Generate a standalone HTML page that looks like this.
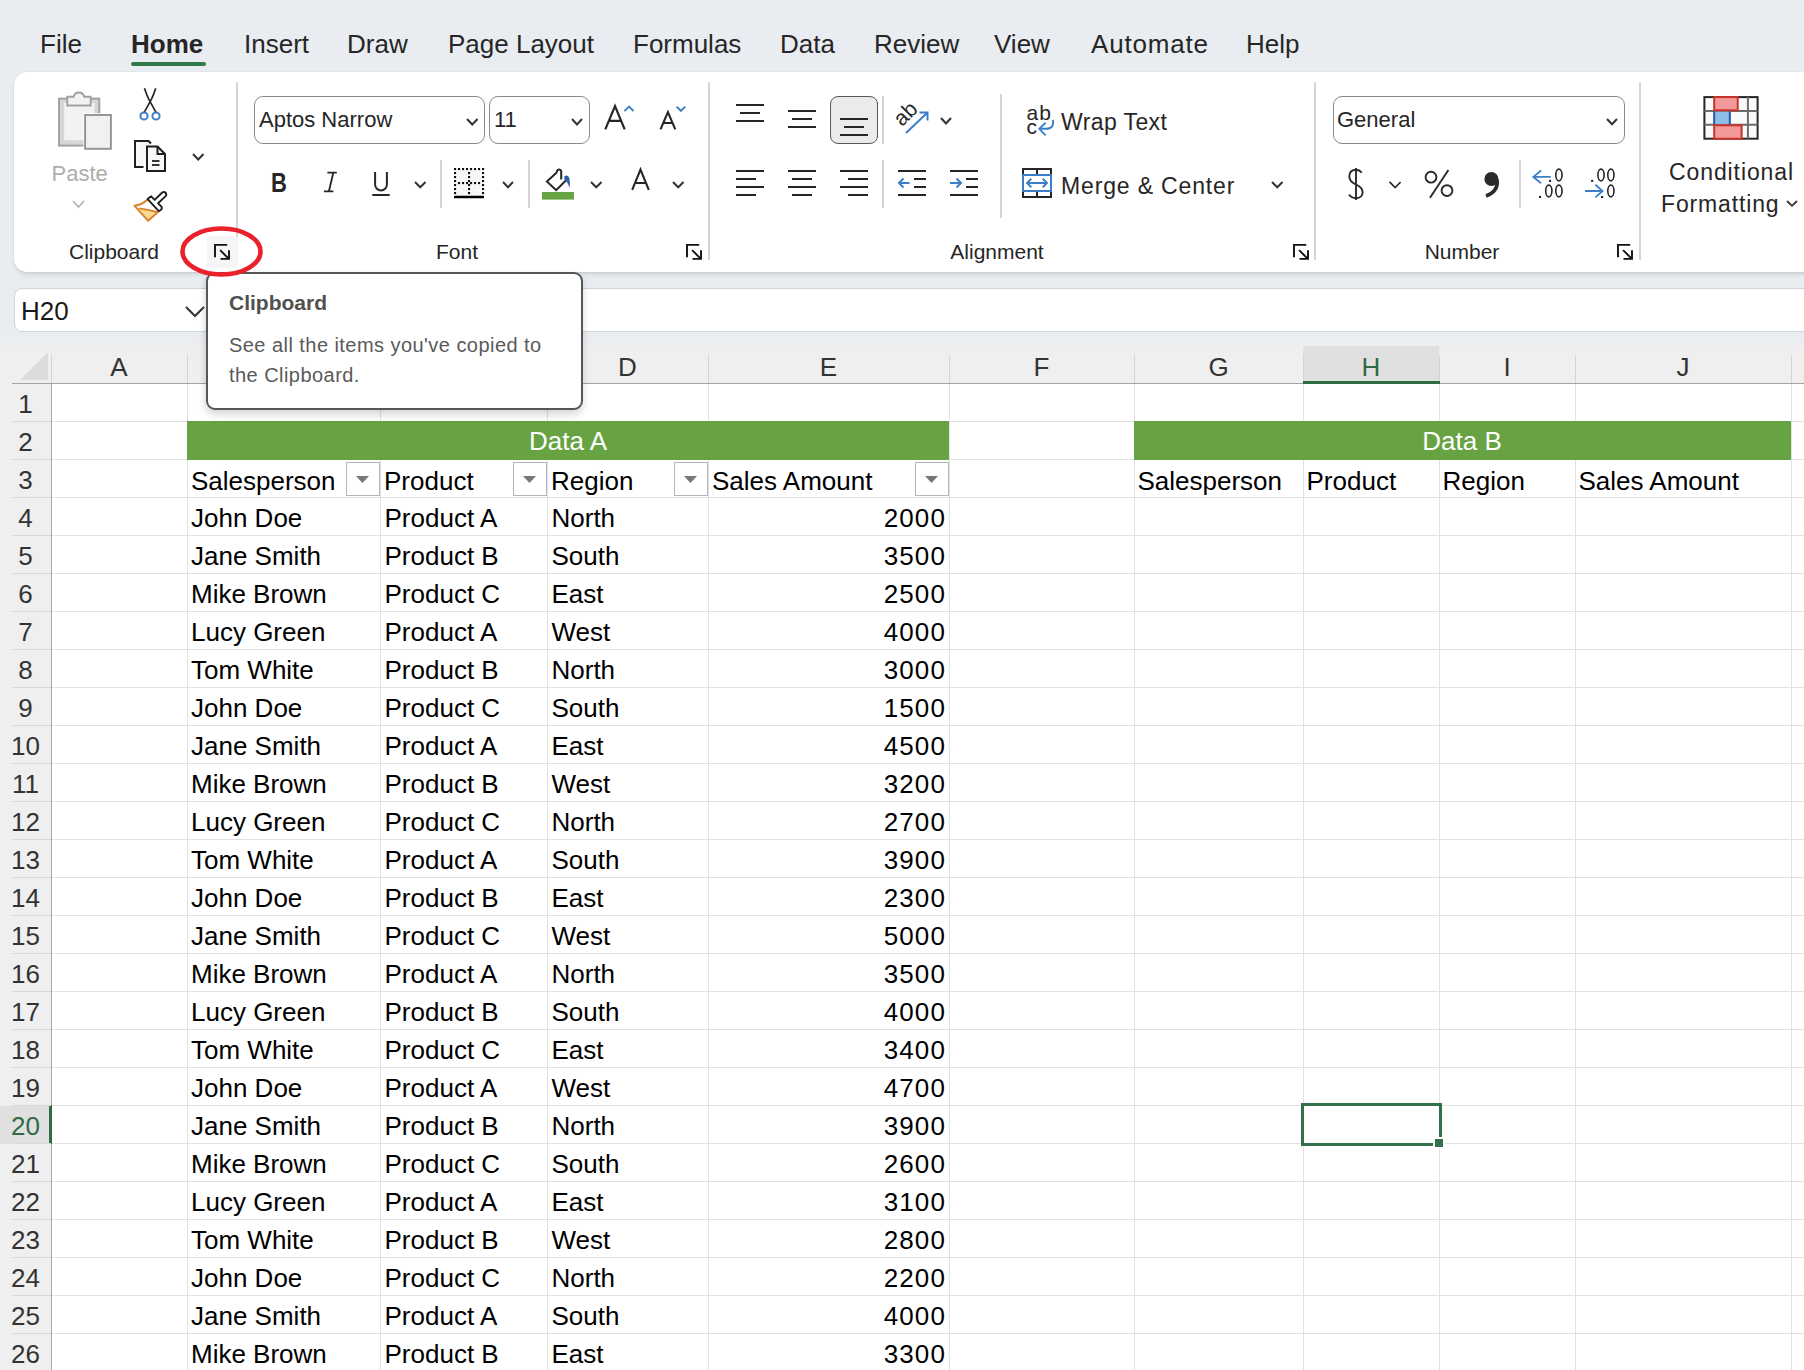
<!DOCTYPE html>
<html><head><meta charset="utf-8"><title>Excel</title>
<style>
html,body{margin:0;padding:0;}
body{width:1804px;height:1370px;overflow:hidden;position:relative;background:#e9ecf0;font-family:"Liberation Sans", sans-serif;}
.t{position:absolute;white-space:pre;font-family:"Liberation Sans", sans-serif;}
.r{position:absolute;box-sizing:border-box;}
</style></head><body>
<div class="t" style="left:40.0px;top:31.0px;font-size:26px;line-height:26px;color:#262626;font-weight:400;">File</div><div class="t" style="left:131.0px;top:31.0px;font-size:26px;line-height:26px;color:#262626;font-weight:700;">Home</div><div class="t" style="left:244.0px;top:31.0px;font-size:26px;line-height:26px;color:#262626;font-weight:400;">Insert</div><div class="t" style="left:347.0px;top:31.0px;font-size:26px;line-height:26px;color:#262626;font-weight:400;">Draw</div><div class="t" style="left:448.0px;top:31.0px;font-size:26px;line-height:26px;color:#262626;font-weight:400;">Page Layout</div><div class="t" style="left:633.0px;top:31.0px;font-size:26px;line-height:26px;color:#262626;font-weight:400;">Formulas</div><div class="t" style="left:780.0px;top:31.0px;font-size:26px;line-height:26px;color:#262626;font-weight:400;">Data</div><div class="t" style="left:874.0px;top:31.0px;font-size:26px;line-height:26px;color:#262626;font-weight:400;">Review</div><div class="t" style="left:994.0px;top:31.0px;font-size:26px;line-height:26px;color:#262626;font-weight:400;">View</div><div class="t" style="left:1091.0px;top:31.0px;font-size:26px;line-height:26px;color:#262626;font-weight:400;letter-spacing:0.8px;">Automate</div><div class="t" style="left:1246.0px;top:31.0px;font-size:26px;line-height:26px;color:#262626;font-weight:400;">Help</div><div class="r" style="left:131px;top:62px;width:75px;height:4px;background:#2f7a48;border-radius:2px;"></div><div class="r" style="left:14px;top:72px;width:1830px;height:200px;background:#fff;border-radius:13px;box-shadow:0 3px 5px -1px rgba(0,0,0,0.13),0 0 1.5px rgba(0,0,0,0.12);"></div><div class="r" style="left:236px;top:82px;width:2px;height:178px;background:#d6d6d6;"></div><div class="r" style="left:708px;top:82px;width:2px;height:178px;background:#d6d6d6;"></div><div class="r" style="left:1314px;top:82px;width:2px;height:178px;background:#d6d6d6;"></div><div class="r" style="left:1639px;top:82px;width:2px;height:178px;background:#d6d6d6;"></div><div class="r" style="left:440px;top:160px;width:2px;height:48px;background:#d6d6d6;"></div><div class="r" style="left:528px;top:160px;width:2px;height:48px;background:#d6d6d6;"></div><div class="r" style="left:882px;top:96px;width:2px;height:48px;background:#d6d6d6;"></div><div class="r" style="left:882px;top:160px;width:2px;height:48px;background:#d6d6d6;"></div><div class="r" style="left:1519px;top:160px;width:2px;height:48px;background:#d6d6d6;"></div><svg class="r" style="left:52px;top:86px;" width="64" height="68" viewBox="0 0 64 68">
<rect x="7" y="12.6" width="40.3" height="47" fill="#d6d6d6" stroke="#a0a0a0" stroke-width="1.9"/>
<rect x="12.2" y="17" width="30.2" height="37.3" fill="#f2f2f2"/>
<path d="M15.3 19.5 V10.8 H21.6 A5.4 5.4 0 0 1 32.2 10.8 H38.7 V19.5 Z" fill="#f2f2f2" stroke="#a0a0a0" stroke-width="1.9"/>
<rect x="31.5" y="27.2" width="29.2" height="37.4" fill="#fff"/>
<rect x="33.1" y="29" width="25.8" height="33.8" fill="#f1f1f1" stroke="#939393" stroke-width="1.9"/>
</svg><div class="t" style="left:51.5px;top:163.4px;font-size:22px;line-height:22px;color:#adadad;font-weight:400;">Paste</div><svg class="r" style="left:71px;top:199px;" width="15" height="10" viewBox="0 0 15 10"><path d="M2 2 L7.5 8 L13 2" fill="none" stroke="#b0b0b0" stroke-width="1.6" stroke-linejoin="miter"/></svg><svg class="r" style="left:136px;top:84px;" width="28" height="40" viewBox="0 0 28 40">
<path d="M8.5 4.3 Q11.5 13.5 14.1 17.6 L20 28.4 M19.7 4.3 Q16.7 13.5 14.1 17.6 L8.2 28.4" fill="none" stroke="#262626" stroke-width="1.7"/>
<circle cx="8" cy="32" r="3.6" fill="#fff" stroke="#3c7fc6" stroke-width="2"/>
<circle cx="20" cy="32" r="3.6" fill="#fff" stroke="#3c7fc6" stroke-width="2"/>
</svg><svg class="r" style="left:130px;top:136px;" width="40" height="40" viewBox="0 0 40 40">
<path d="M13.5 31 H5 V5 H18.5 L21 7.5" fill="#f7f7f7" stroke="#1f1f1f" stroke-width="2"/>
<path d="M17 35 V10.5 H27.5 L35 18 V35 Z" fill="#f7f7f7" stroke="#1f1f1f" stroke-width="2"/>
<path d="M27.5 10.5 V18 H35" fill="none" stroke="#1f1f1f" stroke-width="2"/>
<path d="M22 25 H29.5 M22 29 H29.5" stroke="#333" stroke-width="1.8"/>
</svg><svg class="r" style="left:191px;top:152px;" width="14.5" height="9.5" viewBox="0 0 14.5 9.5"><path d="M2 2 L7.25 7.5 L12.5 2" fill="none" stroke="#333" stroke-width="2" stroke-linejoin="miter"/></svg><svg class="r" style="left:132px;top:188px;" width="38" height="38" viewBox="0 0 38 38">
<path d="M6.6 20.4 Q16 21.5 25.5 24.2 L16.2 32.6 Z" fill="#fbd98e"/>
<path d="M15.8 11.3 Q10 17 2.6 17.8 L16.2 32.8 L26.2 23.8" fill="none" stroke="#d9822b" stroke-width="1.9" stroke-linejoin="round"/>
<path d="M6.6 20.4 Q16 21.5 25.5 24.2" fill="none" stroke="#d9822b" stroke-width="1.9"/>
<path d="M15.6 11.1 L19.1 8.3 L22.7 11.9 L30.2 4.5 Q32.2 3.3 33.8 5 Q35 6.8 33.4 8.4 L26.1 15.3 L29.4 18.6 Q30.6 20.5 28.8 22 L26.8 23.2 Z" fill="#fff" stroke="#1f1f1f" stroke-width="1.9" stroke-linejoin="round"/>
</svg><div class="t" style="left:69.0px;top:241.2px;font-size:21px;line-height:21px;color:#262626;font-weight:400;">Clipboard</div><div class="r" style="left:207px;top:236px;width:31px;height:32px;background:#f5f5f5;border-radius:3px;"></div><svg class="r" style="left:213px;top:243px;" width="18" height="18" viewBox="0 0 18 18"><path d="M2 14.2 V1.9 H14.2" fill="none" stroke="#111" stroke-width="1.9"/><path d="M7.1 7.1 L15.3 15.3 M7.5 15.9 H16 V7.3" fill="none" stroke="#111" stroke-width="1.9"/></svg><div class="r" style="left:254px;top:96px;width:231px;height:48px;border:1.5px solid #8a8a8a;border-radius:9px;background:#fff;"></div><div class="t" style="left:259.0px;top:109.4px;font-size:22px;line-height:22px;color:#262626;font-weight:400;">Aptos Narrow</div><svg class="r" style="left:464.5px;top:116.5px;" width="14.5" height="9.5" viewBox="0 0 14.5 9.5"><path d="M2 2 L7.25 7.5 L12.5 2" fill="none" stroke="#333" stroke-width="2" stroke-linejoin="miter"/></svg><div class="r" style="left:489px;top:96px;width:101px;height:48px;border:1.5px solid #8a8a8a;border-radius:9px;background:#fff;"></div><div class="t" style="left:494.0px;top:109.4px;font-size:22px;line-height:22px;color:#262626;font-weight:400;">11</div><svg class="r" style="left:570px;top:116.5px;" width="14" height="9.5" viewBox="0 0 14 9.5"><path d="M2 2 L7.0 7.5 L12 2" fill="none" stroke="#333" stroke-width="2" stroke-linejoin="miter"/></svg><svg class="r" style="left:595px;top:95px;" width="100" height="45" viewBox="0 0 100 45">
<path d="M10.3 34.4 L20 11.2 L29.7 34.4 M13.6 25.8 H26.4" fill="none" stroke="#262626" stroke-width="2.2" stroke-linejoin="miter"/>
<path d="M29.4 16.1 L34.1 11.6 L38.6 16.1" fill="none" stroke="#3c7fc6" stroke-width="2"/>
<path d="M65.5 34.4 L72.9 17.2 L80.3 34.4 M68.3 28 H77.5" fill="none" stroke="#262626" stroke-width="2.1" stroke-linejoin="miter"/>
<path d="M81.6 11.6 L85.9 15.8 L90.3 11.6" fill="none" stroke="#3c7fc6" stroke-width="2"/>
</svg><div class="t" style="left:271.0px;top:168.7px;font-size:27.5px;line-height:27.5px;color:#262626;font-weight:700;transform:scaleX(0.8);transform-origin:0 0;">B</div><svg class="r" style="left:318px;top:168px;" width="24" height="28" viewBox="0 0 24 28"><path d="M9.4 4.6 H18.8 M5.9 23.4 H15.4 M15.3 4.6 L10.9 23.4" fill="none" stroke="#262626" stroke-width="1.9"/></svg><svg class="r" style="left:369px;top:168px;" width="24" height="30" viewBox="0 0 24 30"><path d="M6.1 4 V16.5 A5.9 5.9 0 0 0 17.9 16.5 V4" fill="none" stroke="#262626" stroke-width="2"/><path d="M3.3 27 H20.7" stroke="#262626" stroke-width="2"/></svg><svg class="r" style="left:413px;top:180px;" width="14.5" height="9.3" viewBox="0 0 14.5 9.3"><path d="M2 2 L7.25 7.3 L12.5 2" fill="none" stroke="#333" stroke-width="2" stroke-linejoin="miter"/></svg><svg class="r" style="left:448px;top:162px;" width="44" height="42" viewBox="0 0 44 42"><rect x="7" y="7" width="28" height="28" fill="#f7f7f7"/><g fill="#111"><rect x="6.00" y="6.00" width="2.1" height="2.1"/><rect x="10.00" y="6.00" width="2.1" height="2.1"/><rect x="14.00" y="6.00" width="2.1" height="2.1"/><rect x="18.00" y="6.00" width="2.1" height="2.1"/><rect x="22.00" y="6.00" width="2.1" height="2.1"/><rect x="26.00" y="6.00" width="2.1" height="2.1"/><rect x="30.00" y="6.00" width="2.1" height="2.1"/><rect x="34.00" y="6.00" width="2.1" height="2.1"/><rect x="6.00" y="10.00" width="2.1" height="2.1"/><rect x="34.00" y="10.00" width="2.1" height="2.1"/><rect x="6.00" y="14.00" width="2.1" height="2.1"/><rect x="34.00" y="14.00" width="2.1" height="2.1"/><rect x="6.00" y="18.00" width="2.1" height="2.1"/><rect x="34.00" y="18.00" width="2.1" height="2.1"/><rect x="6.00" y="22.00" width="2.1" height="2.1"/><rect x="34.00" y="22.00" width="2.1" height="2.1"/><rect x="6.00" y="26.00" width="2.1" height="2.1"/><rect x="34.00" y="26.00" width="2.1" height="2.1"/><rect x="6.00" y="30.00" width="2.1" height="2.1"/><rect x="34.00" y="30.00" width="2.1" height="2.1"/><rect x="20.00" y="10.00" width="2.1" height="2.1"/><rect x="20.00" y="14.00" width="2.1" height="2.1"/><rect x="20.00" y="18.00" width="2.1" height="2.1"/><rect x="20.00" y="22.00" width="2.1" height="2.1"/><rect x="20.00" y="26.00" width="2.1" height="2.1"/><rect x="20.00" y="30.00" width="2.1" height="2.1"/><rect x="10.00" y="20.00" width="2.1" height="2.1"/><rect x="14.00" y="20.00" width="2.1" height="2.1"/><rect x="18.00" y="20.00" width="2.1" height="2.1"/><rect x="22.00" y="20.00" width="2.1" height="2.1"/><rect x="26.00" y="20.00" width="2.1" height="2.1"/><rect x="30.00" y="20.00" width="2.1" height="2.1"/></g><rect x="6" y="33.8" width="30" height="2.5" rx="0.6" fill="#000"/></svg><svg class="r" style="left:501px;top:180px;" width="14" height="9.3" viewBox="0 0 14 9.3"><path d="M2 2 L7.0 7.3 L12 2" fill="none" stroke="#333" stroke-width="2" stroke-linejoin="miter"/></svg><svg class="r" style="left:540px;top:164px;" width="38" height="38" viewBox="0 0 38 38">
<path d="M17 8.3 L6.9 17.5 L16.2 26.2 L26.6 15.8" fill="#fff" stroke="#262626" stroke-width="2" stroke-linejoin="miter"/>
<path d="M17 8.3 V7 A2.2 2.2 0 0 1 21.2 7 V15.5" fill="none" stroke="#262626" stroke-width="2"/>
<path d="M24.2 12.5 Q27 10 29.2 13.5 Q30.5 18 29.4 24.5 Q28.2 18 24.6 16 Z" fill="#2d5fa8"/>
<rect x="2" y="28" width="32" height="7.6" fill="#67a542"/>
</svg><svg class="r" style="left:589px;top:180px;" width="14.5" height="9.3" viewBox="0 0 14.5 9.3"><path d="M2 2 L7.25 7.3 L12.5 2" fill="none" stroke="#333" stroke-width="2" stroke-linejoin="miter"/></svg><svg class="r" style="left:625px;top:160px;" width="30" height="35" viewBox="0 0 30 35"><path d="M7.2 29.8 L15.5 9.6 L23.8 29.8 M9.8 23 H21.2" fill="none" stroke="#262626" stroke-width="2.1"/></svg><svg class="r" style="left:671px;top:180px;" width="14.5" height="9.3" viewBox="0 0 14.5 9.3"><path d="M2 2 L7.25 7.3 L12.5 2" fill="none" stroke="#333" stroke-width="2" stroke-linejoin="miter"/></svg><div class="t" style="left:407.0px;width:100px;text-align:center;top:241.2px;font-size:21px;line-height:21px;color:#262626;font-weight:400;">Font</div><svg class="r" style="left:685px;top:243px;" width="18" height="18" viewBox="0 0 18 18"><path d="M2 14.2 V1.9 H14.2" fill="none" stroke="#111" stroke-width="1.9"/><path d="M7.1 7.1 L15.3 15.3 M7.5 15.9 H16 V7.3" fill="none" stroke="#111" stroke-width="1.9"/></svg><svg class="r" style="left:730px;top:98px;" width="40" height="32" viewBox="0 0 40 32"><path d="M6 7 H34" stroke="#262626" stroke-width="2"/><path d="M10 15 H30" stroke="#262626" stroke-width="2"/><path d="M6 23 H34" stroke="#262626" stroke-width="2"/></svg><svg class="r" style="left:782px;top:104px;" width="40" height="32" viewBox="0 0 40 32"><path d="M6 7 H34" stroke="#262626" stroke-width="2"/><path d="M10 15 H30" stroke="#262626" stroke-width="2"/><path d="M6 23 H34" stroke="#262626" stroke-width="2"/></svg><div class="r" style="left:830px;top:96px;width:48px;height:48px;border:1.5px solid #5a5a5a;border-radius:8px;background:#ebebeb;"></div><svg class="r" style="left:834px;top:112px;" width="40" height="32" viewBox="0 0 40 32"><path d="M6 7 H34" stroke="#262626" stroke-width="2"/><path d="M10 15 H30" stroke="#262626" stroke-width="2"/><path d="M6 23 H34" stroke="#262626" stroke-width="2"/></svg><svg class="r" style="left:890px;top:100px;" width="44" height="40" viewBox="0 0 44 40">
<text x="0" y="0" transform="translate(12 27.3) rotate(-45)" font-family="Liberation Sans" font-size="21.5" fill="#262626">ab</text>
<path d="M16 33 L37 13 M29.5 12.5 H37.5 V20.5" fill="none" stroke="#3c7fc6" stroke-width="2"/>
</svg><svg class="r" style="left:939px;top:115.8px;" width="14" height="9.5" viewBox="0 0 14 9.5"><path d="M2 2 L7.0 7.5 L12 2" fill="none" stroke="#333" stroke-width="2" stroke-linejoin="miter"/></svg><svg class="r" style="left:730px;top:164px;" width="40" height="36" viewBox="0 0 40 36"><path d="M6 7 H34" stroke="#262626" stroke-width="2"/><path d="M6 15 H26" stroke="#262626" stroke-width="2"/><path d="M6 23 H34" stroke="#262626" stroke-width="2"/><path d="M6 31 H26" stroke="#262626" stroke-width="2"/></svg><svg class="r" style="left:782px;top:164px;" width="40" height="36" viewBox="0 0 40 36"><path d="M6 7 H34" stroke="#262626" stroke-width="2"/><path d="M10 15 H30" stroke="#262626" stroke-width="2"/><path d="M6 23 H34" stroke="#262626" stroke-width="2"/><path d="M10 31 H30" stroke="#262626" stroke-width="2"/></svg><svg class="r" style="left:834px;top:164px;" width="40" height="36" viewBox="0 0 40 36"><path d="M6 7 H34" stroke="#262626" stroke-width="2"/><path d="M14 15 H34" stroke="#262626" stroke-width="2"/><path d="M6 23 H34" stroke="#262626" stroke-width="2"/><path d="M14 31 H34" stroke="#262626" stroke-width="2"/></svg><svg class="r" style="left:892px;top:164px;" width="40" height="36" viewBox="0 0 40 36"><path d="M6 7 H34" stroke="#262626" stroke-width="2"/><path d="M22 15 H34" stroke="#262626" stroke-width="2"/><path d="M22 23 H34" stroke="#262626" stroke-width="2"/><path d="M6 31 H34" stroke="#262626" stroke-width="2"/><path d="M7 19 H17.5 M11.5 14.5 L7 19 L11.5 23.5" fill="none" stroke="#3c7fc6" stroke-width="2"/></svg><svg class="r" style="left:944px;top:164px;" width="40" height="36" viewBox="0 0 40 36"><path d="M6 7 H34" stroke="#262626" stroke-width="2"/><path d="M22 15 H34" stroke="#262626" stroke-width="2"/><path d="M22 23 H34" stroke="#262626" stroke-width="2"/><path d="M6 31 H34" stroke="#262626" stroke-width="2"/><path d="M6 19 H17 M12.5 14.5 L17 19 L12.5 23.5" fill="none" stroke="#3c7fc6" stroke-width="2"/></svg><div class="r" style="left:1000px;top:94px;width:2px;height:124px;background:#d6d6d6;"></div><svg class="r" style="left:1024px;top:100px;" width="36" height="40" viewBox="0 0 36 40">
<text x="2.6" y="19.6" font-family="Liberation Sans" font-size="21" fill="#262626">a</text>
<text x="15.2" y="19.6" font-family="Liberation Sans" font-size="21" fill="#262626">b</text>
<text x="2.6" y="33.6" font-family="Liberation Sans" font-size="21" fill="#262626">c</text>
<path d="M28.8 20 Q30.5 28.8 22 28.8 H15.8" fill="none" stroke="#3c7fc6" stroke-width="1.9"/>
<path d="M21.6 22.7 L15.3 28.8 L21.6 35.3" fill="none" stroke="#3c7fc6" stroke-width="1.9"/>
</svg><div class="t" style="left:1061.0px;top:110.5px;font-size:23px;line-height:23px;color:#262626;font-weight:400;letter-spacing:0.4px;">Wrap Text</div><svg class="r" style="left:1020px;top:166px;" width="34" height="34" viewBox="0 0 34 34">
<rect x="3" y="3" width="28" height="28" fill="#fff" stroke="#262626" stroke-width="2"/>
<path d="M17 3 V31" stroke="#262626" stroke-width="2"/>
<rect x="3" y="9" width="28" height="16" fill="#fff" stroke="#3c7fc6" stroke-width="2"/>
<path d="M7.5 17 H26.5 M11.3 12.8 L7 17 L11.3 21.2 M22.7 12.8 L27 17 L22.7 21.2" fill="none" stroke="#3c7fc6" stroke-width="1.9"/>
</svg><div class="t" style="left:1061.0px;top:174.5px;font-size:23px;line-height:23px;color:#262626;font-weight:400;letter-spacing:0.85px;">Merge &amp; Center</div><svg class="r" style="left:1270px;top:180px;" width="14.5" height="9.3" viewBox="0 0 14.5 9.3"><path d="M2 2 L7.25 7.3 L12.5 2" fill="none" stroke="#333" stroke-width="2" stroke-linejoin="miter"/></svg><div class="t" style="left:897.0px;width:200px;text-align:center;top:241.2px;font-size:21px;line-height:21px;color:#262626;font-weight:400;">Alignment</div><svg class="r" style="left:1292px;top:243px;" width="18" height="18" viewBox="0 0 18 18"><path d="M2 14.2 V1.9 H14.2" fill="none" stroke="#111" stroke-width="1.9"/><path d="M7.1 7.1 L15.3 15.3 M7.5 15.9 H16 V7.3" fill="none" stroke="#111" stroke-width="1.9"/></svg><div class="r" style="left:1333px;top:96px;width:292px;height:48px;border:1.5px solid #8a8a8a;border-radius:9px;background:#fff;"></div><div class="t" style="left:1337.0px;top:109.4px;font-size:22px;line-height:22px;color:#262626;font-weight:400;">General</div><svg class="r" style="left:1605px;top:117px;" width="14" height="9.3" viewBox="0 0 14 9.3"><path d="M2 2 L7.0 7.3 L12 2" fill="none" stroke="#333" stroke-width="2" stroke-linejoin="miter"/></svg><svg class="r" style="left:1340px;top:160px;" width="170" height="45" viewBox="0 0 170 45">
<path d="M16 8 V40" stroke="#2a2a2a" stroke-width="1.9"/>
<path d="M21.8 12.6 Q19 9.5 15.5 9.8 Q9.2 10.3 9.3 16.8 Q9.4 21.5 16 24.5 Q22.8 27.5 22.6 32.5 Q22.3 38 16 38.2 Q11.5 38.2 9 34.5" fill="none" stroke="#2a2a2a" stroke-width="1.9"/>
<path d="M49.5 21.8 L55.2 27.6 L60.6 22" fill="none" stroke="#2a2a2a" stroke-width="1.7"/>
<circle cx="91" cy="17.2" r="5.4" fill="none" stroke="#2a2a2a" stroke-width="1.9"/>
<circle cx="107" cy="30.6" r="5.4" fill="none" stroke="#2a2a2a" stroke-width="1.9"/>
<path d="M108.4 9.9 L90 37.7" stroke="#2a2a2a" stroke-width="1.9"/>
<circle cx="151.4" cy="19" r="7" fill="#2a2a2a"/>
<path d="M157 19.5 Q159 31 146 36" fill="none" stroke="#2a2a2a" stroke-width="3.6"/>
</svg><svg class="r" style="left:1525px;top:160px;" width="100" height="45" viewBox="0 0 100 45"><path d="M8.3 16.9 H25.8 M16.1 10.5 L8.3 16.9 L16.1 23.3" fill="none" stroke="#3c7fc6" stroke-width="1.8"/><ellipse cx="33.9" cy="15" rx="3.1" ry="5.9" fill="none" stroke="#262626" stroke-width="1.6"/><rect x="24" y="19.8" width="2.1" height="2.1" fill="#262626"/><rect x="14" y="35.9" width="2.1" height="2.1" fill="#262626"/><ellipse cx="23.8" cy="31" rx="3.1" ry="5.9" fill="none" stroke="#262626" stroke-width="1.6"/><ellipse cx="33.9" cy="31" rx="3.1" ry="5.9" fill="none" stroke="#262626" stroke-width="1.6"/><rect x="66.1" y="19.8" width="2.1" height="2.1" fill="#262626"/><ellipse cx="76" cy="15" rx="3.1" ry="5.9" fill="none" stroke="#262626" stroke-width="1.6"/><ellipse cx="85.9" cy="15" rx="3.1" ry="5.9" fill="none" stroke="#262626" stroke-width="1.6"/><path d="M60.1 31 H77.6 M70.4 24.7 L77.6 31 L70.4 37.4" fill="none" stroke="#3c7fc6" stroke-width="1.8"/><rect x="76" y="35.9" width="2.1" height="2.1" fill="#262626"/><ellipse cx="85.9" cy="31" rx="3.1" ry="5.9" fill="none" stroke="#262626" stroke-width="1.6"/></svg><div class="t" style="left:1362.0px;width:200px;text-align:center;top:241.2px;font-size:21px;line-height:21px;color:#262626;font-weight:400;">Number</div><svg class="r" style="left:1616px;top:243px;" width="18" height="18" viewBox="0 0 18 18"><path d="M2 14.2 V1.9 H14.2" fill="none" stroke="#111" stroke-width="1.9"/><path d="M7.1 7.1 L15.3 15.3 M7.5 15.9 H16 V7.3" fill="none" stroke="#111" stroke-width="1.9"/></svg><svg class="r" style="left:1700px;top:93px;" width="62" height="50" viewBox="0 0 62 50">
<rect x="4.4" y="4.1" width="53.2" height="41.6" fill="#fafafa" stroke="#262626" stroke-width="2"/>
<path d="M4.4 17.9 H57.6 M4.4 31.7 H57.6 M47.9 4.1 V45.7" stroke="#6b6b6b" stroke-width="2"/>
<rect x="13.2" y="18.6" width="17.6" height="12.5" fill="#8fbbe8"/>
<path d="M14.2 17.9 V31.7 M29.8 17.9 V31.7" stroke="#2b5ea8" stroke-width="2"/>
<rect x="14.2" y="4.1" width="23.5" height="13.2" fill="#f29a9a" stroke="#c9332b" stroke-width="2"/>
<rect x="14.2" y="32.3" width="27.4" height="13.4" fill="#f29a9a" stroke="#c9332b" stroke-width="2"/>
</svg><div class="t" style="left:1669.0px;top:160.5px;font-size:23px;line-height:23px;color:#262626;font-weight:400;letter-spacing:0.9px;">Conditional</div><div class="t" style="left:1661.0px;top:192.5px;font-size:23px;line-height:23px;color:#262626;font-weight:400;letter-spacing:0.85px;">Formatting</div><svg class="r" style="left:1785px;top:198.5px;" width="14" height="8.8" viewBox="0 0 14 8.8"><path d="M2 2 L7.0 6.8 L12 2" fill="none" stroke="#333" stroke-width="1.8" stroke-linejoin="miter"/></svg><div class="r" style="left:0px;top:332px;width:1804px;height:19px;background:linear-gradient(#e9ecf0,#eeeff1);"></div><div class="r" style="left:14px;top:288px;width:1830px;height:44px;background:#fff;border:1px solid #d0d3d7;border-radius:8px;"></div><div class="t" style="left:21.0px;top:298.0px;font-size:26px;line-height:26px;color:#1a1a1a;font-weight:400;">H20</div><svg class="r" style="left:184px;top:304px;" width="22" height="16" viewBox="0 0 22 16"><path d="M2 3 L11 12 L20 3" fill="none" stroke="#333" stroke-width="2"/></svg><div class="r" style="left:51px;top:346px;width:1753px;height:38px;background:#efefef;"></div><div class="r" style="left:0px;top:346px;width:51px;height:38px;background:#efefef;"></div><div class="r" style="left:1303px;top:346px;width:136px;height:38px;background:#e0e0e0;"></div><svg class="r" style="left:18px;top:350px;" width="32" height="32" viewBox="0 0 32 32"><path d="M30 2 L30 30 L2 30 Z" fill="#dcdcdc"/></svg><div class="r" style="left:51px;top:355px;width:1px;height:28px;background:#d4d4d4;"></div><div class="r" style="left:187px;top:355px;width:1px;height:28px;background:#d4d4d4;"></div><div class="r" style="left:380px;top:355px;width:1px;height:28px;background:#d4d4d4;"></div><div class="r" style="left:547px;top:355px;width:1px;height:28px;background:#d4d4d4;"></div><div class="r" style="left:708px;top:355px;width:1px;height:28px;background:#d4d4d4;"></div><div class="r" style="left:949px;top:355px;width:1px;height:28px;background:#d4d4d4;"></div><div class="r" style="left:1134px;top:355px;width:1px;height:28px;background:#d4d4d4;"></div><div class="r" style="left:1303px;top:355px;width:1px;height:28px;background:#d4d4d4;"></div><div class="r" style="left:1439px;top:355px;width:1px;height:28px;background:#d4d4d4;"></div><div class="r" style="left:1575px;top:355px;width:1px;height:28px;background:#d4d4d4;"></div><div class="r" style="left:1791px;top:355px;width:1px;height:28px;background:#d4d4d4;"></div><div class="r" style="left:12px;top:382.5px;width:1792px;height:1.5px;background:#a4a4a4;"></div><div class="r" style="left:1303px;top:381px;width:137px;height:3px;background:#2f6b44;"></div><div class="t" style="left:19.0px;width:200px;text-align:center;top:354.0px;font-size:26px;line-height:26px;color:#333;font-weight:400;">A</div><div class="t" style="left:183.5px;width:200px;text-align:center;top:354.0px;font-size:26px;line-height:26px;color:#333;font-weight:400;">B</div><div class="t" style="left:363.5px;width:200px;text-align:center;top:354.0px;font-size:26px;line-height:26px;color:#333;font-weight:400;">C</div><div class="t" style="left:527.5px;width:200px;text-align:center;top:354.0px;font-size:26px;line-height:26px;color:#333;font-weight:400;">D</div><div class="t" style="left:728.5px;width:200px;text-align:center;top:354.0px;font-size:26px;line-height:26px;color:#333;font-weight:400;">E</div><div class="t" style="left:941.5px;width:200px;text-align:center;top:354.0px;font-size:26px;line-height:26px;color:#333;font-weight:400;">F</div><div class="t" style="left:1118.5px;width:200px;text-align:center;top:354.0px;font-size:26px;line-height:26px;color:#333;font-weight:400;">G</div><div class="t" style="left:1271.0px;width:200px;text-align:center;top:354.0px;font-size:26px;line-height:26px;color:#2f6b44;font-weight:400;">H</div><div class="t" style="left:1407.0px;width:200px;text-align:center;top:354.0px;font-size:26px;line-height:26px;color:#333;font-weight:400;">I</div><div class="t" style="left:1583.0px;width:200px;text-align:center;top:354.0px;font-size:26px;line-height:26px;color:#333;font-weight:400;">J</div><div class="r" style="left:0px;top:384px;width:51px;height:1000px;background:#efefef;"></div><div class="r" style="left:51px;top:384px;width:1px;height:1000px;background:#a8a8a8;"></div><div class="r" style="left:52px;top:384px;width:1752px;height:1000px;background:#fff;"></div><div class="r" style="left:0px;top:1106px;width:49px;height:38px;background:#e0e0e0;"></div><div class="r" style="left:49px;top:1105px;width:3px;height:39px;background:#2f6b44;"></div><div class="r" style="left:12px;top:421px;width:39px;height:1px;background:#d8d8d8;"></div><div class="r" style="left:52px;top:421px;width:1752px;height:1px;background:#e1e1e1;"></div><div class="t" style="left:0.5px;width:50px;text-align:center;top:390.5px;font-size:26px;line-height:26px;color:#333;font-weight:400;">1</div><div class="r" style="left:12px;top:459px;width:39px;height:1px;background:#d8d8d8;"></div><div class="r" style="left:52px;top:459px;width:1752px;height:1px;background:#e1e1e1;"></div><div class="t" style="left:0.5px;width:50px;text-align:center;top:428.5px;font-size:26px;line-height:26px;color:#333;font-weight:400;">2</div><div class="r" style="left:12px;top:497px;width:39px;height:1px;background:#d8d8d8;"></div><div class="r" style="left:52px;top:497px;width:1752px;height:1px;background:#e1e1e1;"></div><div class="t" style="left:0.5px;width:50px;text-align:center;top:466.5px;font-size:26px;line-height:26px;color:#333;font-weight:400;">3</div><div class="r" style="left:12px;top:535px;width:39px;height:1px;background:#d8d8d8;"></div><div class="r" style="left:52px;top:535px;width:1752px;height:1px;background:#e1e1e1;"></div><div class="t" style="left:0.5px;width:50px;text-align:center;top:504.5px;font-size:26px;line-height:26px;color:#333;font-weight:400;">4</div><div class="r" style="left:12px;top:573px;width:39px;height:1px;background:#d8d8d8;"></div><div class="r" style="left:52px;top:573px;width:1752px;height:1px;background:#e1e1e1;"></div><div class="t" style="left:0.5px;width:50px;text-align:center;top:542.5px;font-size:26px;line-height:26px;color:#333;font-weight:400;">5</div><div class="r" style="left:12px;top:611px;width:39px;height:1px;background:#d8d8d8;"></div><div class="r" style="left:52px;top:611px;width:1752px;height:1px;background:#e1e1e1;"></div><div class="t" style="left:0.5px;width:50px;text-align:center;top:580.5px;font-size:26px;line-height:26px;color:#333;font-weight:400;">6</div><div class="r" style="left:12px;top:649px;width:39px;height:1px;background:#d8d8d8;"></div><div class="r" style="left:52px;top:649px;width:1752px;height:1px;background:#e1e1e1;"></div><div class="t" style="left:0.5px;width:50px;text-align:center;top:618.5px;font-size:26px;line-height:26px;color:#333;font-weight:400;">7</div><div class="r" style="left:12px;top:687px;width:39px;height:1px;background:#d8d8d8;"></div><div class="r" style="left:52px;top:687px;width:1752px;height:1px;background:#e1e1e1;"></div><div class="t" style="left:0.5px;width:50px;text-align:center;top:656.5px;font-size:26px;line-height:26px;color:#333;font-weight:400;">8</div><div class="r" style="left:12px;top:725px;width:39px;height:1px;background:#d8d8d8;"></div><div class="r" style="left:52px;top:725px;width:1752px;height:1px;background:#e1e1e1;"></div><div class="t" style="left:0.5px;width:50px;text-align:center;top:694.5px;font-size:26px;line-height:26px;color:#333;font-weight:400;">9</div><div class="r" style="left:12px;top:763px;width:39px;height:1px;background:#d8d8d8;"></div><div class="r" style="left:52px;top:763px;width:1752px;height:1px;background:#e1e1e1;"></div><div class="t" style="left:0.5px;width:50px;text-align:center;top:732.5px;font-size:26px;line-height:26px;color:#333;font-weight:400;">10</div><div class="r" style="left:12px;top:801px;width:39px;height:1px;background:#d8d8d8;"></div><div class="r" style="left:52px;top:801px;width:1752px;height:1px;background:#e1e1e1;"></div><div class="t" style="left:0.5px;width:50px;text-align:center;top:770.5px;font-size:26px;line-height:26px;color:#333;font-weight:400;">11</div><div class="r" style="left:12px;top:839px;width:39px;height:1px;background:#d8d8d8;"></div><div class="r" style="left:52px;top:839px;width:1752px;height:1px;background:#e1e1e1;"></div><div class="t" style="left:0.5px;width:50px;text-align:center;top:808.5px;font-size:26px;line-height:26px;color:#333;font-weight:400;">12</div><div class="r" style="left:12px;top:877px;width:39px;height:1px;background:#d8d8d8;"></div><div class="r" style="left:52px;top:877px;width:1752px;height:1px;background:#e1e1e1;"></div><div class="t" style="left:0.5px;width:50px;text-align:center;top:846.5px;font-size:26px;line-height:26px;color:#333;font-weight:400;">13</div><div class="r" style="left:12px;top:915px;width:39px;height:1px;background:#d8d8d8;"></div><div class="r" style="left:52px;top:915px;width:1752px;height:1px;background:#e1e1e1;"></div><div class="t" style="left:0.5px;width:50px;text-align:center;top:884.5px;font-size:26px;line-height:26px;color:#333;font-weight:400;">14</div><div class="r" style="left:12px;top:953px;width:39px;height:1px;background:#d8d8d8;"></div><div class="r" style="left:52px;top:953px;width:1752px;height:1px;background:#e1e1e1;"></div><div class="t" style="left:0.5px;width:50px;text-align:center;top:922.5px;font-size:26px;line-height:26px;color:#333;font-weight:400;">15</div><div class="r" style="left:12px;top:991px;width:39px;height:1px;background:#d8d8d8;"></div><div class="r" style="left:52px;top:991px;width:1752px;height:1px;background:#e1e1e1;"></div><div class="t" style="left:0.5px;width:50px;text-align:center;top:960.5px;font-size:26px;line-height:26px;color:#333;font-weight:400;">16</div><div class="r" style="left:12px;top:1029px;width:39px;height:1px;background:#d8d8d8;"></div><div class="r" style="left:52px;top:1029px;width:1752px;height:1px;background:#e1e1e1;"></div><div class="t" style="left:0.5px;width:50px;text-align:center;top:998.5px;font-size:26px;line-height:26px;color:#333;font-weight:400;">17</div><div class="r" style="left:12px;top:1067px;width:39px;height:1px;background:#d8d8d8;"></div><div class="r" style="left:52px;top:1067px;width:1752px;height:1px;background:#e1e1e1;"></div><div class="t" style="left:0.5px;width:50px;text-align:center;top:1036.5px;font-size:26px;line-height:26px;color:#333;font-weight:400;">18</div><div class="r" style="left:12px;top:1105px;width:39px;height:1px;background:#d8d8d8;"></div><div class="r" style="left:52px;top:1105px;width:1752px;height:1px;background:#e1e1e1;"></div><div class="t" style="left:0.5px;width:50px;text-align:center;top:1074.5px;font-size:26px;line-height:26px;color:#333;font-weight:400;">19</div><div class="r" style="left:12px;top:1143px;width:39px;height:1px;background:#d8d8d8;"></div><div class="r" style="left:52px;top:1143px;width:1752px;height:1px;background:#e1e1e1;"></div><div class="t" style="left:0.5px;width:50px;text-align:center;top:1112.5px;font-size:26px;line-height:26px;color:#2f6b44;font-weight:400;">20</div><div class="r" style="left:12px;top:1181px;width:39px;height:1px;background:#d8d8d8;"></div><div class="r" style="left:52px;top:1181px;width:1752px;height:1px;background:#e1e1e1;"></div><div class="t" style="left:0.5px;width:50px;text-align:center;top:1150.5px;font-size:26px;line-height:26px;color:#333;font-weight:400;">21</div><div class="r" style="left:12px;top:1219px;width:39px;height:1px;background:#d8d8d8;"></div><div class="r" style="left:52px;top:1219px;width:1752px;height:1px;background:#e1e1e1;"></div><div class="t" style="left:0.5px;width:50px;text-align:center;top:1188.5px;font-size:26px;line-height:26px;color:#333;font-weight:400;">22</div><div class="r" style="left:12px;top:1257px;width:39px;height:1px;background:#d8d8d8;"></div><div class="r" style="left:52px;top:1257px;width:1752px;height:1px;background:#e1e1e1;"></div><div class="t" style="left:0.5px;width:50px;text-align:center;top:1226.5px;font-size:26px;line-height:26px;color:#333;font-weight:400;">23</div><div class="r" style="left:12px;top:1295px;width:39px;height:1px;background:#d8d8d8;"></div><div class="r" style="left:52px;top:1295px;width:1752px;height:1px;background:#e1e1e1;"></div><div class="t" style="left:0.5px;width:50px;text-align:center;top:1264.5px;font-size:26px;line-height:26px;color:#333;font-weight:400;">24</div><div class="r" style="left:12px;top:1333px;width:39px;height:1px;background:#d8d8d8;"></div><div class="r" style="left:52px;top:1333px;width:1752px;height:1px;background:#e1e1e1;"></div><div class="t" style="left:0.5px;width:50px;text-align:center;top:1302.5px;font-size:26px;line-height:26px;color:#333;font-weight:400;">25</div><div class="r" style="left:12px;top:1371px;width:39px;height:1px;background:#d8d8d8;"></div><div class="r" style="left:52px;top:1371px;width:1752px;height:1px;background:#e1e1e1;"></div><div class="t" style="left:0.5px;width:50px;text-align:center;top:1340.5px;font-size:26px;line-height:26px;color:#333;font-weight:400;">26</div><div class="r" style="left:187px;top:384px;width:1px;height:1000px;background:#e1e1e1;"></div><div class="r" style="left:380px;top:384px;width:1px;height:1000px;background:#e1e1e1;"></div><div class="r" style="left:547px;top:384px;width:1px;height:1000px;background:#e1e1e1;"></div><div class="r" style="left:708px;top:384px;width:1px;height:1000px;background:#e1e1e1;"></div><div class="r" style="left:949px;top:384px;width:1px;height:1000px;background:#e1e1e1;"></div><div class="r" style="left:1134px;top:384px;width:1px;height:1000px;background:#e1e1e1;"></div><div class="r" style="left:1303px;top:384px;width:1px;height:1000px;background:#e1e1e1;"></div><div class="r" style="left:1439px;top:384px;width:1px;height:1000px;background:#e1e1e1;"></div><div class="r" style="left:1575px;top:384px;width:1px;height:1000px;background:#e1e1e1;"></div><div class="r" style="left:1791px;top:384px;width:1px;height:1000px;background:#e1e1e1;"></div><div class="r" style="left:187px;top:421px;width:762px;height:39px;background:#67a342;"></div><div class="r" style="left:1134px;top:421px;width:657px;height:39px;background:#67a342;"></div><div class="t" style="left:468.0px;width:200px;text-align:center;top:428.0px;font-size:26px;line-height:26px;color:#fff;font-weight:400;">Data A</div><div class="t" style="left:1362.0px;width:200px;text-align:center;top:428.0px;font-size:26px;line-height:26px;color:#fff;font-weight:400;">Data B</div><div class="t" style="left:191.0px;top:468.0px;font-size:26px;line-height:26px;color:#000;font-weight:400;">Salesperson</div><div class="r" style="left:346px;top:462px;width:34px;height:34px;background:#fff;border:1.5px solid #b4b5b8;"></div><svg class="r" style="left:356px;top:476px;" width="14" height="8" viewBox="0 0 14 8"><path d="M0 0 L13 0 L6.5 7 Z" fill="#777"/></svg><div class="t" style="left:384.0px;top:468.0px;font-size:26px;line-height:26px;color:#000;font-weight:400;">Product</div><div class="r" style="left:513px;top:462px;width:34px;height:34px;background:#fff;border:1.5px solid #b4b5b8;"></div><svg class="r" style="left:523px;top:476px;" width="14" height="8" viewBox="0 0 14 8"><path d="M0 0 L13 0 L6.5 7 Z" fill="#777"/></svg><div class="t" style="left:551.0px;top:468.0px;font-size:26px;line-height:26px;color:#000;font-weight:400;">Region</div><div class="r" style="left:674px;top:462px;width:34px;height:34px;background:#fff;border:1.5px solid #b4b5b8;"></div><svg class="r" style="left:684px;top:476px;" width="14" height="8" viewBox="0 0 14 8"><path d="M0 0 L13 0 L6.5 7 Z" fill="#777"/></svg><div class="t" style="left:712.0px;top:468.0px;font-size:26px;line-height:26px;color:#000;font-weight:400;">Sales Amount</div><div class="r" style="left:915px;top:462px;width:34px;height:34px;background:#fff;border:1.5px solid #b4b5b8;"></div><svg class="r" style="left:925px;top:476px;" width="14" height="8" viewBox="0 0 14 8"><path d="M0 0 L13 0 L6.5 7 Z" fill="#777"/></svg><div class="t" style="left:1137.5px;top:468.0px;font-size:26px;line-height:26px;color:#000;font-weight:400;">Salesperson</div><div class="t" style="left:1306.5px;top:468.0px;font-size:26px;line-height:26px;color:#000;font-weight:400;">Product</div><div class="t" style="left:1442.5px;top:468.0px;font-size:26px;line-height:26px;color:#000;font-weight:400;">Region</div><div class="t" style="left:1578.5px;top:468.0px;font-size:26px;line-height:26px;color:#000;font-weight:400;">Sales Amount</div><div class="t" style="left:191.0px;top:505.0px;font-size:26px;line-height:26px;color:#000;font-weight:400;">John Doe</div><div class="t" style="left:384.5px;top:505.0px;font-size:26px;line-height:26px;color:#000;font-weight:400;">Product A</div><div class="t" style="left:551.5px;top:505.0px;font-size:26px;line-height:26px;color:#000;font-weight:400;">North</div><div class="t" style="left:646.0px;width:300px;text-align:right;top:505.0px;font-size:26px;line-height:26px;color:#000;letter-spacing:1.1px;">2000</div><div class="t" style="left:191.0px;top:543.0px;font-size:26px;line-height:26px;color:#000;font-weight:400;">Jane Smith</div><div class="t" style="left:384.5px;top:543.0px;font-size:26px;line-height:26px;color:#000;font-weight:400;">Product B</div><div class="t" style="left:551.5px;top:543.0px;font-size:26px;line-height:26px;color:#000;font-weight:400;">South</div><div class="t" style="left:646.0px;width:300px;text-align:right;top:543.0px;font-size:26px;line-height:26px;color:#000;letter-spacing:1.1px;">3500</div><div class="t" style="left:191.0px;top:581.0px;font-size:26px;line-height:26px;color:#000;font-weight:400;">Mike Brown</div><div class="t" style="left:384.5px;top:581.0px;font-size:26px;line-height:26px;color:#000;font-weight:400;">Product C</div><div class="t" style="left:551.5px;top:581.0px;font-size:26px;line-height:26px;color:#000;font-weight:400;">East</div><div class="t" style="left:646.0px;width:300px;text-align:right;top:581.0px;font-size:26px;line-height:26px;color:#000;letter-spacing:1.1px;">2500</div><div class="t" style="left:191.0px;top:619.0px;font-size:26px;line-height:26px;color:#000;font-weight:400;">Lucy Green</div><div class="t" style="left:384.5px;top:619.0px;font-size:26px;line-height:26px;color:#000;font-weight:400;">Product A</div><div class="t" style="left:551.5px;top:619.0px;font-size:26px;line-height:26px;color:#000;font-weight:400;">West</div><div class="t" style="left:646.0px;width:300px;text-align:right;top:619.0px;font-size:26px;line-height:26px;color:#000;letter-spacing:1.1px;">4000</div><div class="t" style="left:191.0px;top:657.0px;font-size:26px;line-height:26px;color:#000;font-weight:400;">Tom White</div><div class="t" style="left:384.5px;top:657.0px;font-size:26px;line-height:26px;color:#000;font-weight:400;">Product B</div><div class="t" style="left:551.5px;top:657.0px;font-size:26px;line-height:26px;color:#000;font-weight:400;">North</div><div class="t" style="left:646.0px;width:300px;text-align:right;top:657.0px;font-size:26px;line-height:26px;color:#000;letter-spacing:1.1px;">3000</div><div class="t" style="left:191.0px;top:695.0px;font-size:26px;line-height:26px;color:#000;font-weight:400;">John Doe</div><div class="t" style="left:384.5px;top:695.0px;font-size:26px;line-height:26px;color:#000;font-weight:400;">Product C</div><div class="t" style="left:551.5px;top:695.0px;font-size:26px;line-height:26px;color:#000;font-weight:400;">South</div><div class="t" style="left:646.0px;width:300px;text-align:right;top:695.0px;font-size:26px;line-height:26px;color:#000;letter-spacing:1.1px;">1500</div><div class="t" style="left:191.0px;top:733.0px;font-size:26px;line-height:26px;color:#000;font-weight:400;">Jane Smith</div><div class="t" style="left:384.5px;top:733.0px;font-size:26px;line-height:26px;color:#000;font-weight:400;">Product A</div><div class="t" style="left:551.5px;top:733.0px;font-size:26px;line-height:26px;color:#000;font-weight:400;">East</div><div class="t" style="left:646.0px;width:300px;text-align:right;top:733.0px;font-size:26px;line-height:26px;color:#000;letter-spacing:1.1px;">4500</div><div class="t" style="left:191.0px;top:771.0px;font-size:26px;line-height:26px;color:#000;font-weight:400;">Mike Brown</div><div class="t" style="left:384.5px;top:771.0px;font-size:26px;line-height:26px;color:#000;font-weight:400;">Product B</div><div class="t" style="left:551.5px;top:771.0px;font-size:26px;line-height:26px;color:#000;font-weight:400;">West</div><div class="t" style="left:646.0px;width:300px;text-align:right;top:771.0px;font-size:26px;line-height:26px;color:#000;letter-spacing:1.1px;">3200</div><div class="t" style="left:191.0px;top:809.0px;font-size:26px;line-height:26px;color:#000;font-weight:400;">Lucy Green</div><div class="t" style="left:384.5px;top:809.0px;font-size:26px;line-height:26px;color:#000;font-weight:400;">Product C</div><div class="t" style="left:551.5px;top:809.0px;font-size:26px;line-height:26px;color:#000;font-weight:400;">North</div><div class="t" style="left:646.0px;width:300px;text-align:right;top:809.0px;font-size:26px;line-height:26px;color:#000;letter-spacing:1.1px;">2700</div><div class="t" style="left:191.0px;top:847.0px;font-size:26px;line-height:26px;color:#000;font-weight:400;">Tom White</div><div class="t" style="left:384.5px;top:847.0px;font-size:26px;line-height:26px;color:#000;font-weight:400;">Product A</div><div class="t" style="left:551.5px;top:847.0px;font-size:26px;line-height:26px;color:#000;font-weight:400;">South</div><div class="t" style="left:646.0px;width:300px;text-align:right;top:847.0px;font-size:26px;line-height:26px;color:#000;letter-spacing:1.1px;">3900</div><div class="t" style="left:191.0px;top:885.0px;font-size:26px;line-height:26px;color:#000;font-weight:400;">John Doe</div><div class="t" style="left:384.5px;top:885.0px;font-size:26px;line-height:26px;color:#000;font-weight:400;">Product B</div><div class="t" style="left:551.5px;top:885.0px;font-size:26px;line-height:26px;color:#000;font-weight:400;">East</div><div class="t" style="left:646.0px;width:300px;text-align:right;top:885.0px;font-size:26px;line-height:26px;color:#000;letter-spacing:1.1px;">2300</div><div class="t" style="left:191.0px;top:923.0px;font-size:26px;line-height:26px;color:#000;font-weight:400;">Jane Smith</div><div class="t" style="left:384.5px;top:923.0px;font-size:26px;line-height:26px;color:#000;font-weight:400;">Product C</div><div class="t" style="left:551.5px;top:923.0px;font-size:26px;line-height:26px;color:#000;font-weight:400;">West</div><div class="t" style="left:646.0px;width:300px;text-align:right;top:923.0px;font-size:26px;line-height:26px;color:#000;letter-spacing:1.1px;">5000</div><div class="t" style="left:191.0px;top:961.0px;font-size:26px;line-height:26px;color:#000;font-weight:400;">Mike Brown</div><div class="t" style="left:384.5px;top:961.0px;font-size:26px;line-height:26px;color:#000;font-weight:400;">Product A</div><div class="t" style="left:551.5px;top:961.0px;font-size:26px;line-height:26px;color:#000;font-weight:400;">North</div><div class="t" style="left:646.0px;width:300px;text-align:right;top:961.0px;font-size:26px;line-height:26px;color:#000;letter-spacing:1.1px;">3500</div><div class="t" style="left:191.0px;top:999.0px;font-size:26px;line-height:26px;color:#000;font-weight:400;">Lucy Green</div><div class="t" style="left:384.5px;top:999.0px;font-size:26px;line-height:26px;color:#000;font-weight:400;">Product B</div><div class="t" style="left:551.5px;top:999.0px;font-size:26px;line-height:26px;color:#000;font-weight:400;">South</div><div class="t" style="left:646.0px;width:300px;text-align:right;top:999.0px;font-size:26px;line-height:26px;color:#000;letter-spacing:1.1px;">4000</div><div class="t" style="left:191.0px;top:1037.0px;font-size:26px;line-height:26px;color:#000;font-weight:400;">Tom White</div><div class="t" style="left:384.5px;top:1037.0px;font-size:26px;line-height:26px;color:#000;font-weight:400;">Product C</div><div class="t" style="left:551.5px;top:1037.0px;font-size:26px;line-height:26px;color:#000;font-weight:400;">East</div><div class="t" style="left:646.0px;width:300px;text-align:right;top:1037.0px;font-size:26px;line-height:26px;color:#000;letter-spacing:1.1px;">3400</div><div class="t" style="left:191.0px;top:1075.0px;font-size:26px;line-height:26px;color:#000;font-weight:400;">John Doe</div><div class="t" style="left:384.5px;top:1075.0px;font-size:26px;line-height:26px;color:#000;font-weight:400;">Product A</div><div class="t" style="left:551.5px;top:1075.0px;font-size:26px;line-height:26px;color:#000;font-weight:400;">West</div><div class="t" style="left:646.0px;width:300px;text-align:right;top:1075.0px;font-size:26px;line-height:26px;color:#000;letter-spacing:1.1px;">4700</div><div class="t" style="left:191.0px;top:1113.0px;font-size:26px;line-height:26px;color:#000;font-weight:400;">Jane Smith</div><div class="t" style="left:384.5px;top:1113.0px;font-size:26px;line-height:26px;color:#000;font-weight:400;">Product B</div><div class="t" style="left:551.5px;top:1113.0px;font-size:26px;line-height:26px;color:#000;font-weight:400;">North</div><div class="t" style="left:646.0px;width:300px;text-align:right;top:1113.0px;font-size:26px;line-height:26px;color:#000;letter-spacing:1.1px;">3900</div><div class="t" style="left:191.0px;top:1151.0px;font-size:26px;line-height:26px;color:#000;font-weight:400;">Mike Brown</div><div class="t" style="left:384.5px;top:1151.0px;font-size:26px;line-height:26px;color:#000;font-weight:400;">Product C</div><div class="t" style="left:551.5px;top:1151.0px;font-size:26px;line-height:26px;color:#000;font-weight:400;">South</div><div class="t" style="left:646.0px;width:300px;text-align:right;top:1151.0px;font-size:26px;line-height:26px;color:#000;letter-spacing:1.1px;">2600</div><div class="t" style="left:191.0px;top:1189.0px;font-size:26px;line-height:26px;color:#000;font-weight:400;">Lucy Green</div><div class="t" style="left:384.5px;top:1189.0px;font-size:26px;line-height:26px;color:#000;font-weight:400;">Product A</div><div class="t" style="left:551.5px;top:1189.0px;font-size:26px;line-height:26px;color:#000;font-weight:400;">East</div><div class="t" style="left:646.0px;width:300px;text-align:right;top:1189.0px;font-size:26px;line-height:26px;color:#000;letter-spacing:1.1px;">3100</div><div class="t" style="left:191.0px;top:1227.0px;font-size:26px;line-height:26px;color:#000;font-weight:400;">Tom White</div><div class="t" style="left:384.5px;top:1227.0px;font-size:26px;line-height:26px;color:#000;font-weight:400;">Product B</div><div class="t" style="left:551.5px;top:1227.0px;font-size:26px;line-height:26px;color:#000;font-weight:400;">West</div><div class="t" style="left:646.0px;width:300px;text-align:right;top:1227.0px;font-size:26px;line-height:26px;color:#000;letter-spacing:1.1px;">2800</div><div class="t" style="left:191.0px;top:1265.0px;font-size:26px;line-height:26px;color:#000;font-weight:400;">John Doe</div><div class="t" style="left:384.5px;top:1265.0px;font-size:26px;line-height:26px;color:#000;font-weight:400;">Product C</div><div class="t" style="left:551.5px;top:1265.0px;font-size:26px;line-height:26px;color:#000;font-weight:400;">North</div><div class="t" style="left:646.0px;width:300px;text-align:right;top:1265.0px;font-size:26px;line-height:26px;color:#000;letter-spacing:1.1px;">2200</div><div class="t" style="left:191.0px;top:1303.0px;font-size:26px;line-height:26px;color:#000;font-weight:400;">Jane Smith</div><div class="t" style="left:384.5px;top:1303.0px;font-size:26px;line-height:26px;color:#000;font-weight:400;">Product A</div><div class="t" style="left:551.5px;top:1303.0px;font-size:26px;line-height:26px;color:#000;font-weight:400;">South</div><div class="t" style="left:646.0px;width:300px;text-align:right;top:1303.0px;font-size:26px;line-height:26px;color:#000;letter-spacing:1.1px;">4000</div><div class="t" style="left:191.0px;top:1341.0px;font-size:26px;line-height:26px;color:#000;font-weight:400;">Mike Brown</div><div class="t" style="left:384.5px;top:1341.0px;font-size:26px;line-height:26px;color:#000;font-weight:400;">Product B</div><div class="t" style="left:551.5px;top:1341.0px;font-size:26px;line-height:26px;color:#000;font-weight:400;">East</div><div class="t" style="left:646.0px;width:300px;text-align:right;top:1341.0px;font-size:26px;line-height:26px;color:#000;letter-spacing:1.1px;">3300</div><div class="r" style="left:1301px;top:1103px;width:141px;height:43px;border:3px solid #33714a;"></div><div class="r" style="left:1433px;top:1137px;width:12px;height:12px;background:#fff;"></div><div class="r" style="left:1435px;top:1139px;width:8px;height:8px;background:#33714a;"></div><div class="r" style="left:206px;top:272px;width:377px;height:138px;background:#fff;border:2px solid #565656;border-radius:9px;box-shadow:0 5px 9px rgba(0,0,0,0.13),-2px 2px 6px rgba(0,0,0,0.05);"></div><div class="t" style="left:229.0px;top:292.2px;font-size:21px;line-height:21px;color:#505050;font-weight:700;">Clipboard</div><div class="t" style="left:229.0px;top:335.1px;font-size:20px;line-height:20px;color:#5a5a5a;font-weight:400;letter-spacing:0.45px;">See all the items you've copied to</div><div class="t" style="left:229.0px;top:365.1px;font-size:20px;line-height:20px;color:#5a5a5a;font-weight:400;letter-spacing:0.45px;">the Clipboard.</div><svg class="r" style="left:176px;top:222px;" width="92" height="60" viewBox="0 0 92 60"><ellipse cx="45.5" cy="29.5" rx="39" ry="23" fill="none" stroke="#e8212b" stroke-width="4.6"/></svg></body></html>
